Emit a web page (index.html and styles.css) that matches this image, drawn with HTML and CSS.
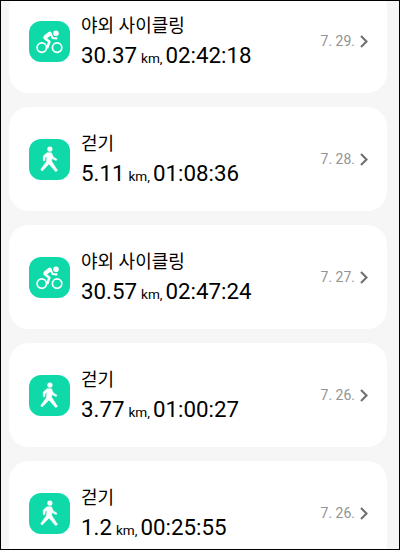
FILE: index.html
```
<!doctype html>
<html lang="ko">
<head>
<meta charset="utf-8">
<meta name="viewport" content="width=device-width, initial-scale=1.0">
<link rel="stylesheet" href="styles.css">
<title>운동 기록</title>
</head>
<body>
<svg class="symbols" width="0" height="0">
  <symbol id="bike" viewBox="0 0 41 41">
    <g fill="none" stroke="#fff" stroke-linecap="round" stroke-linejoin="round">
      <circle cx="12.8" cy="26.6" r="4.7" stroke-width="1.7"/>
      <circle cx="28.1" cy="26.6" r="4.7" stroke-width="1.7"/>
      <path d="M20.8 12.7L16.6 15.9" stroke-width="4.2"/>
      <path d="M15.6 17L20.4 20.8L18.4 26.2" stroke-width="2.5"/>
      <path d="M21.8 13L23.6 17L27.4 17.4" stroke-width="2.1"/>
    </g>
    <circle cx="27" cy="12.2" r="2.8" fill="#fff"/>
  </symbol>
  <symbol id="walk" viewBox="0 0 41 41">
    <circle cx="20.9" cy="10.1" r="2.6" fill="#fff"/>
    <path d="M18 13.8L22.4 13.8L24.3 17.9L27.9 20.2L27.2 21.6L22.9 19.4L22.6 22.3L28.5 31.5L26.6 32.6L20 25L13.2 32L11.7 30.7L17.5 22.5L17.9 17.4L16.1 18.4L15.8 21.8L14.3 21.7L14.3 17Z" fill="#fff" stroke="#fff" stroke-width=".6" stroke-linejoin="round"/>
  </symbol>
  <symbol id="arrow" viewBox="0 0 8 13">
    <path d="M1 1L6.5 6.5L1 12" fill="none" stroke="#707070" stroke-width="2.1"/>
  </symbol>
</svg>
<div class="screen">
  <ul class="list">
    <li class="card">
      <svg class="icon"><use href="#bike"/></svg>
      <div class="info">
        <div class="title">야외 사이클링</div>
        <div class="record">30.37<span class="unit">km,</span>02:42:18</div>
      </div>
      <span class="date">7. 29.</span>
      <svg class="arrow"><use href="#arrow"/></svg>
    </li>
    <li class="card">
      <svg class="icon"><use href="#walk"/></svg>
      <div class="info">
        <div class="title">걷기</div>
        <div class="record">5.11<span class="unit">km,</span>01:08:36</div>
      </div>
      <span class="date">7. 28.</span>
      <svg class="arrow"><use href="#arrow"/></svg>
    </li>
    <li class="card">
      <svg class="icon"><use href="#bike"/></svg>
      <div class="info">
        <div class="title">야외 사이클링</div>
        <div class="record">30.57<span class="unit">km,</span>02:47:24</div>
      </div>
      <span class="date">7. 27.</span>
      <svg class="arrow"><use href="#arrow"/></svg>
    </li>
    <li class="card">
      <svg class="icon"><use href="#walk"/></svg>
      <div class="info">
        <div class="title">걷기</div>
        <div class="record">3.77<span class="unit">km,</span>01:00:27</div>
      </div>
      <span class="date">7. 26.</span>
      <svg class="arrow"><use href="#arrow"/></svg>
    </li>
    <li class="card">
      <svg class="icon"><use href="#walk"/></svg>
      <div class="info">
        <div class="title">걷기</div>
        <div class="record">1.2<span class="unit">km,</span>00:25:55</div>
      </div>
      <span class="date">7. 26.</span>
      <svg class="arrow"><use href="#arrow"/></svg>
    </li>
  </ul>
</div>
</body>
</html>
```
FILE: styles.css
```
* {
    box-sizing: border-box;
}
body {
    margin: 0;
    font-family: Roboto, "Noto Sans CJK KR", sans-serif;
    color: #000;
}
.symbols {
    display: block;
}
.screen {
    width: 400px;
    height: 550px;
    border: 1px solid #000;
    background: #f6f6f6;
    overflow: hidden;
}
.list {
    display: flex;
    flex-direction: column;
    gap: 14px;
    margin: -12px 12px 0 8px;
    padding: 0;
    list-style: none;
}
.card {
    display: flex;
    align-items: center;
    height: 104px;
    padding: 0 19px 0 20px;
    border-radius: 20px;
    background: #fff;
}
.icon {
    width: 41px;
    height: 41px;
    border-radius: 12px;
    background: #0fd9a9;
}
.info {
    flex: 1;
    margin-left: 11px;
    padding-top: 3px;
    white-space: nowrap;
}
.title {
    font-size: 18px;
    line-height: 26px;
}
.record {
    margin-top: 1px;
    font-size: 22.3px;
    line-height: 30px;
}
.unit {
    margin: 0 3px 0 4px;
    font-size: 13.6px;
}
.date {
    font-size: 14px;
    line-height: 18px;
    color: #949494;
}
.arrow {
    width: 8px;
    height: 13px;
    margin-left: 5px;
}
```
